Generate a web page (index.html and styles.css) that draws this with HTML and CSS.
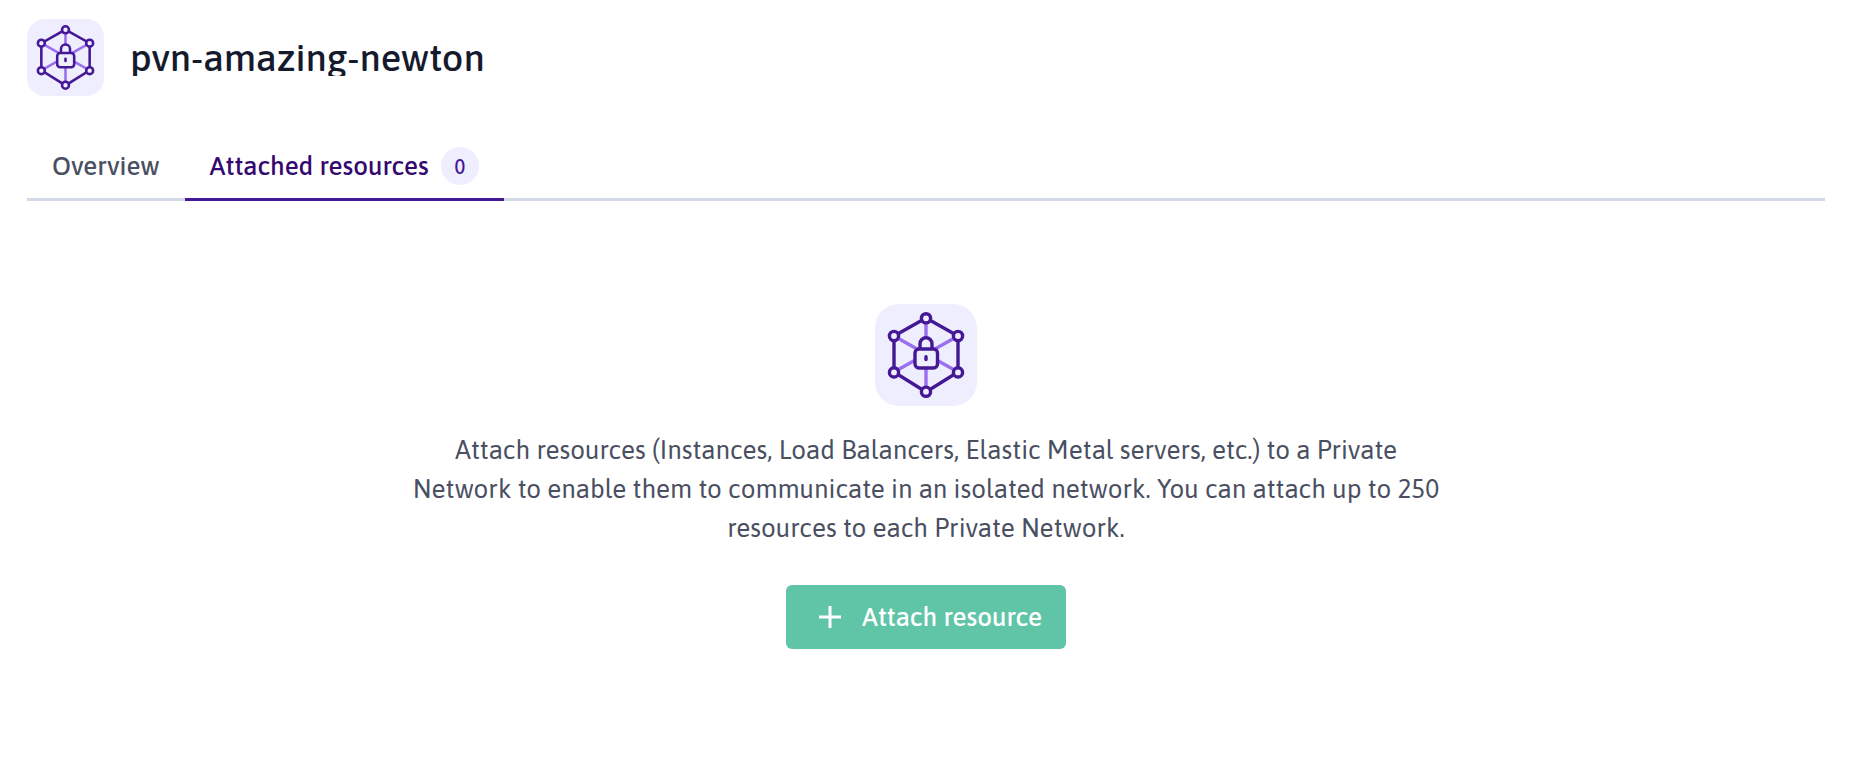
FILE: index.html
```html
<!DOCTYPE html>
<html lang="en">
<head>
<meta charset="utf-8">
<title>pvn-amazing-newton</title>
<link rel="stylesheet" href="styles.css">
</head>
<body>
<svg class="sprite" aria-hidden="true">
  <symbol id="private-network" viewBox="0 0 102 102">
    <g fill="none" stroke-width="3.4">
      <path class="spokes" d="M51 14V88M19 32L83 68M83 32L19 68"/>
      <path class="outline" d="M51 14L83 32V68L51 88L19 68V32Z"/>
      <g class="node">
        <circle cx="51" cy="14.3" r="4.6"/><circle cx="83" cy="32" r="4.6"/>
        <circle cx="83" cy="68.4" r="4.6"/><circle cx="51" cy="87.7" r="4.6"/>
        <circle cx="19" cy="68.4" r="4.6"/><circle cx="19" cy="32" r="4.6"/>
        <path d="M45 45V39.8a6 6 0 0 1 12 0V45"/>
        <rect x="40" y="45" width="22.5" height="19" rx="4"/>
      </g>
      <path class="outline" stroke-linecap="round" d="M51 52.8V55.6"/>
    </g>
  </symbol>
</svg>
<header class="header">
  <svg class="product-icon" aria-hidden="true"><use href="#private-network"/></svg>
  <h1 class="title">pvn-amazing-newton</h1>
</header>
<nav class="tabs">
  <a class="tab" href="#overview">Overview</a>
  <a class="tab tab-active" href="#resources" aria-current="page">Attached resources <span class="badge">0</span></a>
</nav>
<main class="empty">
  <svg class="product-icon product-icon-large" aria-hidden="true"><use href="#private-network"/></svg>
  <p class="description">Attach resources (Instances, Load Balancers, Elastic Metal servers, etc.) to a Private Network to enable them to communicate in an isolated network. You can attach up to 250 resources to each Private Network.</p>
  <button class="button" type="button">
    <svg class="plus" viewBox="0 0 24 24" aria-hidden="true"><path d="M12 1V23M1 12H23"/></svg>
    Attach resource
  </button>
</main>
</body>
</html>
```
FILE: styles.css
```css
* { box-sizing: border-box; }

body {
  margin: 0;
  padding: 19px 31px 32px 27px;
  background: #fff;
  color: #4a4f62;
  font-family: Asap, "Noto Sans", "Open Sans", sans-serif;
  font-size: 26px;
}

.sprite { position: absolute; width: 0; height: 0; }
.spokes { stroke: #9b6ff0; }
.outline { stroke: #451896; }
.node { fill: #efeeff; stroke: #451896; }

.product-icon {
  flex: none;
  width: 77px;
  height: 77px;
  border-radius: 18px;
  background: #efeeff;
}

.product-icon-large {
  width: 102px;
  height: 102px;
  border-radius: 24px;
}

.header {
  display: flex;
  align-items: center;
  gap: 26px;
}

.title {
  margin: 0;
  overflow: hidden;
  color: #151a2d;
  font-size: 38px;
  font-weight: 500;
  line-height: 37px;
}

.tabs {
  display: flex;
  margin-top: 38px;
  box-shadow: inset 0 -3px #d4d9e7;
}

.tab {
  display: flex;
  align-items: center;
  gap: 12px;
  height: 67px;
  padding: 0 25px;
  border-bottom: 3px solid transparent;
  color: #4a4f62;
  font-weight: 500;
  text-decoration: none;
}

.tab-active {
  border-color: #451896;
  color: #34086e;
}

.badge {
  display: grid;
  place-items: center;
  width: 38px;
  height: 38px;
  border-radius: 50%;
  background: #efeeff;
  color: #451896;
  font-size: 20px;
}

.empty {
  display: flex;
  flex-direction: column;
  align-items: center;
  padding-top: 103px;
}

.description {
  max-width: 1040px;
  margin: 25px 0 37px;
  line-height: 39px;
  text-align: center;
}

.button {
  display: flex;
  align-items: center;
  gap: 20px;
  height: 64px;
  padding: 0 24px 0 32px;
  border: 0;
  border-radius: 6px;
  background: #60c5a6;
  color: #fff;
  font: inherit;
  font-weight: 500;
}

.plus {
  width: 24px;
  height: 24px;
  fill: none;
  stroke: #fff;
  stroke-width: 3;
}
```
